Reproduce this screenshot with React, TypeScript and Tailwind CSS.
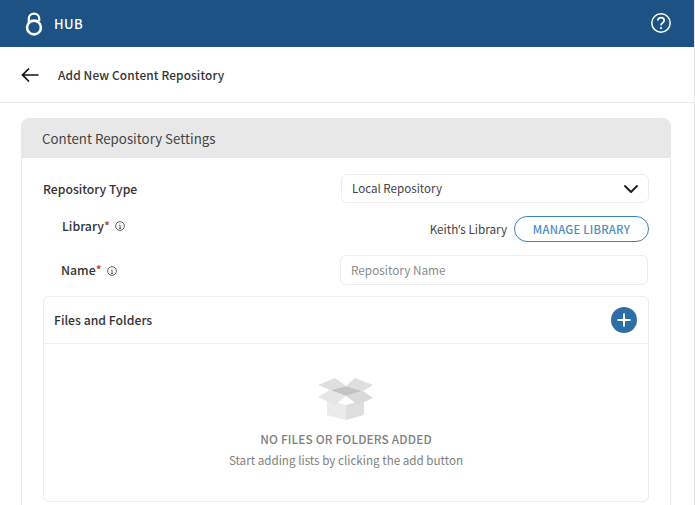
import { ChevronDown, Plus } from "lucide-react";

const FONT = "font-['Noto_Sans_CJK_SC','Source_Sans_Pro','Noto_Sans',sans-serif]";

function InfoIcon() {
  return (
    <svg width="10" height="10" viewBox="0 0 10 10" fill="none" stroke="#333" strokeWidth="0.8">
      <circle cx="5" cy="5" r="4.4" />
      <path d="M4.2 4.3H5.1V7.4M4.1 7.4H6" />
      <circle cx="5" cy="2.8" r="0.4" fill="#333" stroke="none" />
    </svg>
  );
}

function LockLogo() {
  return (
    <svg width="18" height="24" viewBox="0 0 18 24" fill="none" stroke="#fff">
      <circle cx="9" cy="15.5" r="6.9" strokeWidth="2.6" />
      <path d="M3.8 10V6.6C3.8 3.6 6 1.6 9 1.6s5.2 2 5.2 5V9" strokeWidth="2.2" />
    </svg>
  );
}

function HelpIcon() {
  return (
    <svg width="20" height="20" viewBox="0 0 20 20" fill="none" stroke="#fff" strokeWidth="1.5">
      <circle cx="10" cy="10" r="9.2" />
      <path d="M6.8 7.6C6.8 5.7 8.2 4.6 10 4.6c1.8 0 3.2 1.1 3.2 2.8 0 2.5-3.2 2.5-3.2 5.1" strokeWidth="1.7" />
      <circle cx="10" cy="15.1" r="1.1" fill="#fff" stroke="none" />
    </svg>
  );
}

function BackArrow() {
  return (
    <svg width="18" height="16" viewBox="0 0 18 16" fill="none" stroke="#111" strokeWidth="1.7">
      <path d="M17.5 8H1.5M8 1.5 1.5 8 8 14.5" />
    </svg>
  );
}

function EmptyBox() {
  return (
    <svg width="56" height="42" viewBox="0 0 56 42">
      <path d="M9 22V37L28 42V27Z" fill="#ebebeb" />
      <path d="M46 22V37L28 42V27Z" fill="#dedede" />
      <path d="M12 12 28 8 45 13 28 18Z" fill="#c4c4c4" />
      <path d="M0 7 17 0 28 8 12 12Z" fill="#dfdfdf" />
      <path d="M37 0 55 7 45 13 28 8Z" fill="#dfdfdf" />
      <path d="M0 19 12 12 28 18 17 27Z" fill="#e6e6e6" />
      <path d="M28 18 45 13 55 20 40 27Z" fill="#dadada" />
    </svg>
  );
}

function Label({ text }: { text: string }) {
  return (
    <div className="flex items-center text-[12.3px] font-medium text-[#333]">
      <span>{text}</span>
      <span className="text-[#b23a2e]">*</span>
      <span className="ml-[5px] flex">
        <InfoIcon />
      </span>
    </div>
  );
}

export default function App() {
  return (
    <div className={`${FONT} flex h-[505px] w-[695px] flex-col overflow-hidden border-r border-[#e6e6e6] bg-white`}>
      <header className="flex h-[47px] shrink-0 items-center justify-between bg-[#1c5284] pl-[25px] pr-[23px]">
        <div className="flex items-center gap-[11px]">
          <LockLogo />
          <span className="text-[13px] font-medium tracking-[0.03em] text-white">HUB</span>
        </div>
        <div className="-mt-[1px] flex">
          <HelpIcon />
        </div>
      </header>

      <div className="flex h-[56px] shrink-0 items-center border-b border-[#e8e8e8] pl-[21px]">
        <BackArrow />
        <h1 className="ml-[19px] mt-[1px] text-[11.9px] font-medium tracking-[0.01em] text-[#333]">Add New Content Repository</h1>
      </div>

      <div className="flex-1 overflow-hidden pl-[21px] pr-[23px] pt-[15px]">
        <section className="h-[420px] rounded-t-[8px] border-x border-[#e8e8e8]">
          <div className="flex h-[40px] items-center rounded-t-[8px] bg-[#e8e8e8] pl-[20px] pt-[1px] text-[13.3px] text-[#444]">
            Content Repository Settings
          </div>

          <div className="px-[21px] pt-[16px]">
            <div className="flex items-center justify-between">
              <span className="mt-[1px] text-[12.2px] font-medium text-[#333]">Repository Type</span>
              <div className="flex h-[29px] w-[308px] items-center justify-between rounded-[6px] border border-[#ececec] pl-[10px] pr-[5px] text-[11.6px] text-[#444]">
                Local Repository
                <ChevronDown size={24} strokeWidth={2} color="#222" />
              </div>
            </div>

            <div className="mt-[13px] flex h-[26px] items-center justify-between pl-[19px]">
              <div className="-mt-[6px]">
                <Label text="Library" />
              </div>
              <div className="flex items-center gap-[7px]">
                <span className="text-[11.7px] text-[#444]">
                  Keith<span className="font-['Noto_Sans',sans-serif]">’</span>s Library
                </span>
                <button className="flex h-[26px] w-[135px] items-center justify-center rounded-full border border-[#3d83b9] text-[11.3px] font-medium tracking-[0.02em] text-[#4a8ec0]">
                  MANAGE LIBRARY
                </button>
              </div>
            </div>

            <div className="mt-[13px] flex items-center justify-between pl-[18px] pr-[1px]">
              <div className="mt-[1px]">
                <Label text="Name" />
              </div>
              <div className="flex h-[30px] w-[308px] items-center rounded-[6px] border border-[#ececec] pl-[10px] text-[11.75px] text-[#8c8c8c]">
                Repository Name
              </div>
            </div>

            <div className="mt-[11px] h-[206px] rounded-[6px] border border-[#ececec]">
              <div className="flex h-[47px] items-center justify-between border-b border-[#ececec] pl-[10px] pr-[11px]">
                <span className="text-[12.25px] font-medium text-[#333]">Files and Folders</span>
                <span className="flex h-[26px] w-[26px] items-center justify-center rounded-full bg-[#2c6ea5]">
                  <Plus size={20} strokeWidth={2.4} color="#fff" />
                </span>
              </div>
              <div className="flex flex-col items-center pt-[34px]">
                <EmptyBox />
                <span className="mt-[10px] text-[11.8px] font-medium tracking-[0.015em] text-[#808080]">NO FILES OR FOLDERS ADDED</span>
                <span className="mt-[3px] text-[11.65px] text-[#808080]">Start adding lists by clicking the add button</span>
              </div>
            </div>
          </div>
        </section>
      </div>
    </div>
  );
}
